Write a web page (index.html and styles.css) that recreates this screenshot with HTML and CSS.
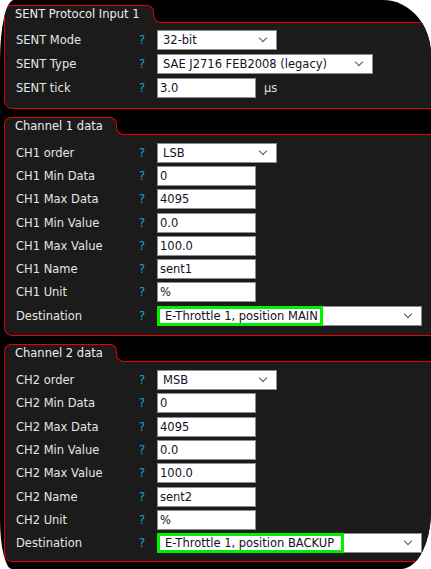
FILE: index.html
```html
<!DOCTYPE html>
<html>
	<head>
		<meta charset="UTF-8">
		<title>SENT input</title>
		<link rel="stylesheet" href="styles.css">
	</head>
	<body>
		<div class="frame">
			<div class="panel first">
				<div class="tab">SENT Protocol Input 1</div>
				<div class="row tall"><span class="lbl">SENT Mode</span><span class="help">?</span><div class="cell"><div class="select w120">32-bit</div></div></div>
				<div class="row tall"><span class="lbl">SENT Type</span><span class="help">?</span><div class="cell"><div class="select w216">SAE J2716 FEB2008 (legacy)</div></div></div>
				<div class="row tall"><span class="lbl">SENT tick</span><span class="help">?</span><div class="cell"><div class="input">3.0</div><span class="unit">µs</span></div></div>
			</div>

			<div class="panel">
				<div class="tab">Channel 1 data</div>
				<div class="row"><span class="lbl">CH1 order</span><span class="help">?</span><div class="cell"><div class="select w120">LSB</div></div></div>
				<div class="row"><span class="lbl">CH1 Min Data</span><span class="help">?</span><div class="cell"><div class="input">0</div></div></div>
				<div class="row"><span class="lbl">CH1 Max Data</span><span class="help">?</span><div class="cell"><div class="input">4095</div></div></div>
				<div class="row"><span class="lbl">CH1 Min Value</span><span class="help">?</span><div class="cell"><div class="input">0.0</div></div></div>
				<div class="row"><span class="lbl">CH1 Max Value</span><span class="help">?</span><div class="cell"><div class="input">100.0</div></div></div>
				<div class="row"><span class="lbl">CH1 Name</span><span class="help">?</span><div class="cell"><div class="input">sent1</div></div></div>
				<div class="row"><span class="lbl">CH1 Unit</span><span class="help">?</span><div class="cell"><div class="input">%</div></div></div>
				<div class="row"><span class="lbl">Destination</span><span class="help">?</span><div class="cell"><div class="select dest"><span class="pick main">E-Throttle 1, position MAIN</span></div></div></div>
			</div>

			<div class="panel last">
				<div class="tab">Channel 2 data</div>
				<div class="row"><span class="lbl">CH2 order</span><span class="help">?</span><div class="cell"><div class="select w120">MSB</div></div></div>
				<div class="row"><span class="lbl">CH2 Min Data</span><span class="help">?</span><div class="cell"><div class="input">0</div></div></div>
				<div class="row"><span class="lbl">CH2 Max Data</span><span class="help">?</span><div class="cell"><div class="input">4095</div></div></div>
				<div class="row"><span class="lbl">CH2 Min Value</span><span class="help">?</span><div class="cell"><div class="input">0.0</div></div></div>
				<div class="row"><span class="lbl">CH2 Max Value</span><span class="help">?</span><div class="cell"><div class="input">100.0</div></div></div>
				<div class="row"><span class="lbl">CH2 Name</span><span class="help">?</span><div class="cell"><div class="input">sent2</div></div></div>
				<div class="row"><span class="lbl">CH2 Unit</span><span class="help">?</span><div class="cell"><div class="input">%</div></div></div>
				<div class="row"><span class="lbl">Destination</span><span class="help">?</span><div class="cell"><div class="select dest"><span class="pick backup">E-Throttle 1, position BACKUP</span></div></div></div>
			</div>
		</div>
	</body>
</html>
```

FILE: styles.css
```css
body {
	margin: 0;
	background: #fff;
	font-family: "DejaVu Sans", Verdana, sans-serif;
	font-size: 11.5px;
}

.frame {
	height: 569px;
	box-sizing: border-box;
	padding: 5px 0 0 4px;
	background: #000;
	overflow: hidden;
	border-radius: 14px 48px 30px 12px / 60px 55px 58px 50px;
}

.panel {
	position: relative;
	margin: 25px -20px 0 0;
	padding: 6px 0 8px 11px;
	background: #1b1b1b;
	border: 1px solid #e80000;
	border-radius: 0 8px 8px 8px;
}

.panel.first {
	margin-top: 17px;
	padding-top: 5px;
	padding-bottom: 8px;
}

.panel.last {
	padding-bottom: 6px;
}

.tab {
	position: absolute;
	left: -1px;
	top: -18px;
	height: 17px;
	line-height: 17px;
	padding: 0 13px 0 10px;
	color: #eee;
	background: #1b1b1b;
	border: 1px solid #e80000;
	border-bottom: none;
	border-radius: 7px 7px 0 0;
	white-space: nowrap;
}

.tab::before,
.tab::after {
	content: "";
	position: absolute;
	left: 100%;
	bottom: 0;
	width: 8px;
	height: 8px;
}

.tab::before {
	background: #1b1b1b;
}

.tab::after {
	box-sizing: border-box;
	width: 9px;
	height: 9px;
	background: #000;
	border-left: 1px solid #e80000;
	border-bottom: 1px solid #e80000;
	border-bottom-left-radius: 8px;
}

.row {
	display: grid;
	grid-template-columns: 123px 18px 1fr;
	align-items: center;
	height: 23.3px;
}

.row.tall {
	height: 24px;
}

.lbl {
	color: #e6e6e6;
	white-space: nowrap;
}

.help {
	color: #1ea2d6;
}

.cell {
	display: flex;
	align-items: center;
}

.input,
.select {
	position: relative;
	box-sizing: border-box;
	height: 20px;
	line-height: 18px;
	background: #fff;
	border: 1px solid #8c8c8c;
	color: #14102a;
	white-space: nowrap;
}

.input {
	width: 99px;
	padding-left: 2px;
}

.select {
	padding-left: 5px;
}

.select::after {
	content: "";
	position: absolute;
	right: 10px;
	top: 4px;
	width: 5px;
	height: 5px;
	border-right: 1px solid #555;
	border-bottom: 1px solid #555;
	transform: rotate(45deg);
}

.w120 {
	width: 120px;
}

.w216 {
	width: 216px;
}

.dest {
	width: 265px;
	padding-left: 0;
}

.pick {
	display: block;
	box-sizing: border-box;
	height: 20px;
	line-height: 14px;
	margin: -1px 0 0 -1px;
	padding-left: 5px;
	border: 3px solid #00f000;
}

.pick.main {
	width: 166px;
}

.pick.backup {
	width: 187px;
}

.unit {
	margin-left: 8px;
	color: #ddd;
}
```
